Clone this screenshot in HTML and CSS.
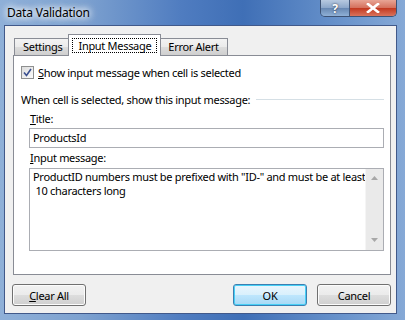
FILE: index.html
```html
<!DOCTYPE html>
<html lang="en">
<head>
  <meta charset="UTF-8">
  <title>Data Validation</title>
  <link rel="stylesheet" href="styles.css">
</head>
<body>
  <div class="window">
    <div class="titlebar">
      <span class="title">Data Validation</span>
      <div class="caption-buttons">
        <div class="cap-btn help">?</div>
        <div class="cap-btn close">
          <svg width="14" height="10" viewBox="0 0 14 10">
            <path d="M2 1 L12 9 M12 1 L2 9" stroke="#fff" stroke-width="2.6" stroke-linecap="square"/>
          </svg>
        </div>
      </div>
    </div>

    <div class="client">
      <div class="tabs">
        <div class="tab">Settings</div>
        <div class="tab active"><span class="focus">Input Message</span></div>
        <div class="tab">Error Alert</div>
      </div>

      <div class="panel">
        <label class="check-row">
          <span class="checkbox">
            <svg width="9" height="9" viewBox="0 0 9 9">
              <path d="M1 4.5 L3.5 7.5 L8 1" fill="none" stroke="#3a4f8f" stroke-width="1.6"/>
            </svg>
          </span>
          <span><u>S</u>how input message when cell is selected</span>
        </label>

        <div class="group-label">
          <span>When cell is selected, show this input message:</span>
          <div class="rule"></div>
        </div>

        <div class="field-label"><u>T</u>itle:</div>
        <div class="textbox">ProductsId</div>

        <div class="field-label memo-label"><u>I</u>nput message:</div>
        <div class="memo">
          <div class="memo-text">ProductID numbers must be prefixed with "ID-" and must be at least<br>&nbsp;10 characters long</div>
          <div class="scrollbar">
            <svg width="7" height="4" viewBox="0 0 7 4"><path d="M0 4 L3.5 0 L7 4 Z" fill="#a8a8a8"/></svg>
            <svg width="7" height="4" viewBox="0 0 7 4"><path d="M0 0 L3.5 4 L7 0 Z" fill="#a8a8a8"/></svg>
          </div>
        </div>
      </div>

      <div class="buttons">
        <button class="btn"><u>C</u>lear All</button>
        <div class="spacer"></div>
        <button class="btn default">OK</button>
        <button class="btn">Cancel</button>
      </div>
    </div>
  </div>
</body>
</html>
```

FILE: styles.css
```css
body {
  margin: 0;
  font-family: "Noto Sans", "Open Sans", sans-serif;
  font-size: 11px;
  letter-spacing: -0.3px;
  color: #000;
}
.window {
  width: 405px;
  height: 320px;
  box-sizing: border-box;
  padding: 0 8px 6px 4px;
  background: linear-gradient(90deg, #8fb0d8 0%, #7ea2d0 20%, #4f7cc0 45%, #3f6fb6 60%, #6a94cc 85%, #86a9d6 100%);
  display: flex;
  flex-direction: column;
  overflow: hidden;
}
.titlebar {
  height: 25px;
  display: flex;
  align-items: flex-start;
}
.title {
  margin: 4px 0 0 3px;
  font-size: 12px;
  letter-spacing: -0.2px;
  color: #000;
  text-shadow: 0 0 8px #fff, 0 0 8px #fff, 0 0 6px #fff;
}
.caption-buttons {
  margin-left: auto;
  margin-right: 0;
  display: flex;
  border: 1px solid #3d5274;
  border-top: none;
  border-radius: 0 0 5px 5px;
  overflow: hidden;
  height: 16px;
}
.cap-btn {
  display: flex;
  align-items: center;
  justify-content: center;
  color: #fff;
  font-weight: bold;
  font-size: 12px;
}
.help {
  width: 28px;
  background: linear-gradient(#b7c9e0, #8ba6c9 50%, #6787b2 51%, #8fb0d6);
  border-right: 1px solid #41577a;
  text-shadow: 0 0 2px #223;
}
.close {
  width: 46px;
  background: linear-gradient(#e8a595, #d46f5b 50%, #c2381f 51%, #d9735c);
}
.client {
  flex: 1;
  background: #f0f0f0;
  border: 1px solid #41598a;
  padding: 8px 5px 0 8px;
  display: flex;
  flex-direction: column;
}
.tabs {
  display: flex;
  align-items: flex-end;
  height: 21px;
  padding-left: 1px;
  position: relative;
  z-index: 1;
}
.tab {
  height: 17px;
  box-sizing: border-box;
  border: 1px solid #898c95;
  border-bottom: none;
  background: linear-gradient(#f3f3f3, #ebebeb 50%, #dddddd 51%, #cfcfcf);
  padding: 0 8px;
  line-height: 15px;
  margin-right: -1px;
}
.tab.active {
  height: 22px;
  margin-bottom: -1px;
  background: #fff;
  padding: 3px 3px 0;
  margin-left: -2px;
  margin-right: -2px;
  position: relative;
}
.focus {
  display: inline-block;
  border: 1px dotted #000;
  padding: 0 5px;
  line-height: 13px;
}
.panel {
  width: 378px;
  height: 220px;
  box-sizing: border-box;
  background: #fff;
  border: 1px solid #898c95;
  padding: 9px 6px 0 7px;
}
.check-row {
  display: flex;
  align-items: center;
  gap: 4px;
  height: 14px;
}
.checkbox {
  width: 11px;
  height: 11px;
  border: 1px solid #8e8f8f;
  background: linear-gradient(135deg, #dcdcdc, #fbfbfb);
  display: flex;
  align-items: center;
  justify-content: center;
}
.group-label {
  display: flex;
  align-items: center;
  gap: 6px;
  margin-top: 12px;
  height: 16px;
}
.rule {
  flex: 1;
  border-top: 1px solid #d5dfe5;
}
.field-label {
  margin: 4px 0 0 9px;
  height: 16px;
  line-height: 16px;
}
.memo-label {
  margin-top: 2px;
}
.textbox {
  margin: 1px 0 0 8px;
  height: 20px;
  box-sizing: border-box;
  border: 1px solid #abadb3;
  padding: 0 3px;
  line-height: 18px;
}
.memo {
  margin: 2px 0 0 8px;
  height: 83px;
  box-sizing: border-box;
  border: 1px solid #abadb3;
  display: flex;
}
.memo-text {
  flex: 1;
  min-width: 0;
  overflow: hidden;
  padding: 1px 3px;
  line-height: 14px;
  white-space: nowrap;
}
.scrollbar {
  width: 17px;
  flex-shrink: 0;
  background: #eaeaea;
  border-left: 1px solid #f5f5f5;
  display: flex;
  flex-direction: column;
  align-items: center;
  justify-content: space-between;
  padding: 7px 0 8px;
}
.buttons {
  display: flex;
  margin-top: 9px;
  margin-left: -1px;
  gap: 10px;
}
.spacer {
  flex: 1;
}
.btn {
  width: 74px;
  height: 22px;
  font-family: inherit;
  font-size: 11px;
  letter-spacing: -0.3px;
  color: #000;
  border: 1px solid #707070;
  border-radius: 3px;
  background: linear-gradient(#f2f2f2, #ebebeb 50%, #dddddd 51%, #cfcfcf);
  box-shadow: inset 0 0 0 1px #fcfcfc;
  padding: 0;
}
.btn.default {
  border-color: #3c7fb1;
  box-shadow: inset 0 0 0 1px #48d0f6;
  background: linear-gradient(#eaf6fd, #d9f0fc 50%, #bee6fd 51%, #a7d9f5);
}
```
